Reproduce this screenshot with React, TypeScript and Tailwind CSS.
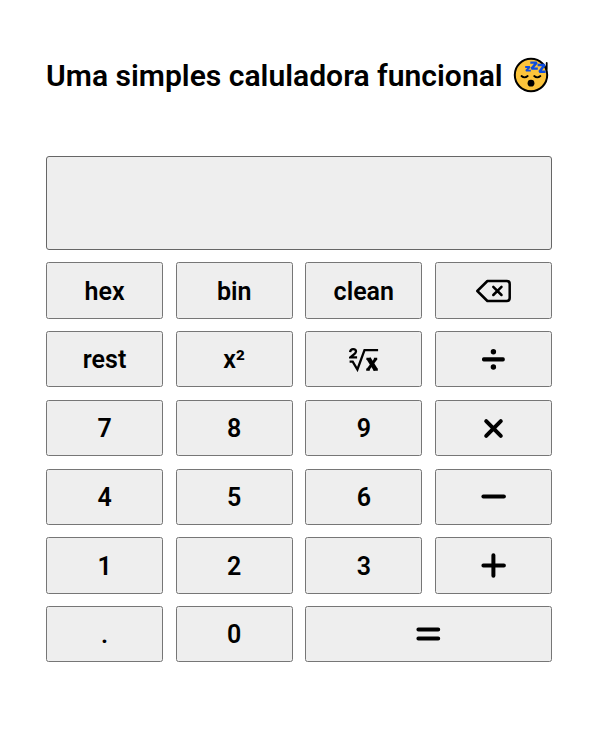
import type { ReactNode } from "react";

function Key({ children, label, wide = false }: { children: ReactNode; label?: string; wide?: boolean }) {
  return (
    <button
      type="button"
      aria-label={label}
      className={`flex min-w-0 items-center justify-center rounded-[2.5px] border border-[#767676] bg-[#eeeeee] text-[25px] leading-none font-semibold text-black ${wide ? "col-span-2" : ""}`}
    >
      {label ? children : <span className="pt-[1.6px]">{children}</span>}
    </button>
  );
}

function SleepingFace() {
  return (
    <svg viewBox="0 0 36 36" className="h-9 w-9" fill="none" strokeLinecap="round" strokeLinejoin="round">
      <circle cx="18" cy="18" r="16.2" fill="#fcc43b" stroke="#000" strokeWidth="2" />
      <path d="M8.5 19q3 2.8 6.2 0M21.2 19q3 2.8 6.2 0" stroke="#000" strokeWidth="1.8" />
      <circle cx="18" cy="26.2" r="3.4" fill="#000" />
      <path d="M33.7 6v6" stroke="#000" strokeWidth="1.8" />
      <g stroke="#0c4ce0" strokeLinecap="butt" strokeLinejoin="bevel">
        <path d="M12.2 10h4.6l-3.8 3.6h4.8" strokeWidth="1.8" />
        <path d="M17.3 5.6h6.4l-5.2 6h6.3" strokeWidth="2.4" />
        <path d="M24.6 8h6.9l-5.1 6.8h6.2" strokeWidth="2.5" />
      </g>
    </svg>
  );
}

function Stroke({ d, width = 4 }: { d: string; width?: number }) {
  return (
    <svg viewBox="0 0 36 36" className="h-9 w-9" fill="none" stroke="currentColor" strokeWidth={width} strokeLinecap="round" strokeLinejoin="round">
      <path d={d} />
    </svg>
  );
}

export default function App() {
  return (
    <main className="h-[731px] w-[610px] bg-white pt-[57px] pl-[46px] font-['Roboto',sans-serif] text-black">
      <h1 className="flex h-9 items-center gap-[10.5px] text-[30.08px] leading-9 font-semibold whitespace-nowrap">
        <span className="pt-0.5">Uma simples caluladora funcional</span>
        <SleepingFace />
      </h1>
      <div className="mt-[63px] h-[93.75px] w-[506px] rounded-[3px] border border-[#666666] bg-[#eeeeee]" />
      <div className="mt-[12.5px] grid h-[400px] w-[506px] grid-cols-4 grid-rows-6 gap-[12.5px]">
        <Key>hex</Key>
        <Key>bin</Key>
        <Key>clean</Key>
        <Key label="Backspace">
          <svg viewBox="0 0 36 36" className="h-9 w-9" fill="none" stroke="#000" strokeWidth="2.5" strokeLinecap="round" strokeLinejoin="round">
            <path d="M12.4 9H31.7q3 0 3 3v14q0 3-3 3H12.4L2.3 19Z" />
            <path d="m18.3 14.8 8.2 8.2m0-8.2-8.2 8.2" />
          </svg>
        </Key>
        <Key>rest</Key>
        <Key>x²</Key>
        <Key label="Square root">
          <svg viewBox="0 0 30 26" className="h-[26px] w-[30px]" fill="none" stroke="#000">
            <path d="M1.1 6.1Q1.5 3.2 4.1 3.2q2.9 0 2.9 2.4 0 1.3-1.8 2.6L1.4 11.4h6.7" strokeWidth="2.3" />
            <path d="M.6 15.6h3.1l4.7 7.9L15.5 4.2h13.6" strokeWidth="2.3" />
            <path d="M17.4 12.8h3.9M24.9 12.8h3.3M17.2 23.6h3.5M24.5 23.6h4.3" strokeWidth="2.3" />
            <path d="M26.8 12.8 18.9 23.6" strokeWidth="2.9" />
            <path d="m19.6 12.5 7.2 11.4" strokeWidth="4.4" />
          </svg>
        </Key>
        <Key label="Divide">
          <svg viewBox="0 0 36 36" className="h-9 w-9" fill="#000">
            <rect x="7" y="16.2" width="22.8" height="4.2" rx="1.7" />
            <circle cx="18.4" cy="10.8" r="2.7" />
            <circle cx="18.4" cy="26" r="2.7" />
          </svg>
        </Key>
        <Key>7</Key>
        <Key>8</Key>
        <Key>9</Key>
        <Key label="Multiply"><Stroke d="m11.2 11.2 14.6 14.6m0-14.6L11.2 25.8" /></Key>
        <Key>4</Key>
        <Key>5</Key>
        <Key>6</Key>
        <Key label="Subtract"><Stroke d="M8.4 17.5h20.5" /></Key>
        <Key>1</Key>
        <Key>2</Key>
        <Key>3</Key>
        <Key label="Add"><Stroke d="M8.4 18.4h20.5M18.4 8.2v20.5" /></Key>
        <Key>.</Key>
        <Key>0</Key>
        <Key label="Equals" wide><Stroke d="M7.4 13.6h19.8M7.4 22.6h19.8" /></Key>
      </div>
    </main>
  );
}
